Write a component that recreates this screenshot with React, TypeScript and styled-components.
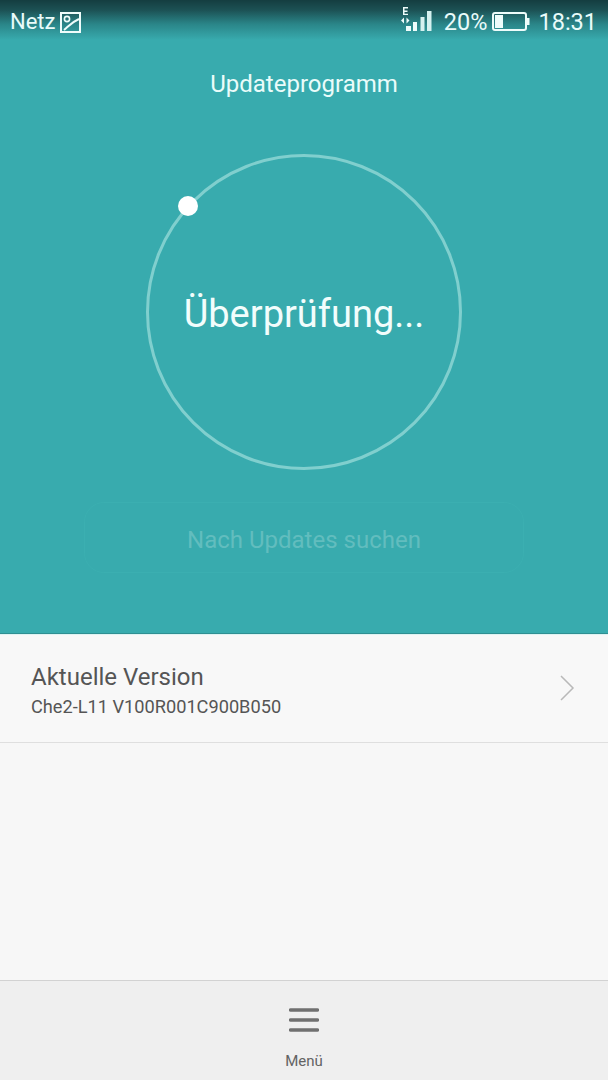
import React from "react";
import styled, { createGlobalStyle } from "styled-components";

const Global = createGlobalStyle`
  html, body { margin: 0; padding: 0; background: #f7f7f7; }
  body { font-family: Roboto, "Liberation Sans", sans-serif; }
`;

const Screen = styled.div`
  width: 608px;
  height: 1080px;
  display: flex;
  flex-direction: column;
  overflow: hidden;
  background: #f7f7f7;
`;

const Hero = styled.section`
  height: 633px;
  flex: none;
  display: flex;
  flex-direction: column;
  align-items: center;
  background: #38abae;
  border-bottom: 1px solid #2f8f92;
  box-sizing: content-box;
`;

const StatusBar = styled.header`
  align-self: stretch;
  height: 44px;
  flex: none;
  padding: 0 11px 0 10px;
  box-sizing: border-box;
  display: flex;
  align-items: flex-start;
  justify-content: space-between;
  color: #e9fbfa;
  background: linear-gradient(#143d40 0, #1c5154 10px, #2a8588 24px, #38abae 40px);
`;

const StatusGroup = styled.div`
  display: flex;
  align-items: center;
  height: 44px;
  line-height: 44px;
`;

const StatusLabel = styled.span<{ $gap?: number; $size?: number }>`
  margin-left: ${(p) => p.$gap ?? 0}px;
  font-size: ${(p) => p.$size ?? 23.5}px;
`;

const Title = styled.h1`
  margin: 26px 0 0;
  font-size: 24px;
  line-height: 28px;
  font-weight: 400;
  color: #eafcfa;
`;

const Ring = styled.div`
  position: relative;
  margin-top: 56px;
  width: 316px;
  height: 316px;
  padding-top: 4px;
  box-sizing: border-box;
  border-radius: 50%;
  border: 3.5px solid #80cfce;
  display: flex;
  align-items: center;
  justify-content: center;
  color: #f2fdfc;
  font-size: 38px;
  font-weight: 400;
`;

const Dot = styled.div`
  position: absolute;
  left: 29px;
  top: 39px;
  width: 20px;
  height: 20px;
  border-radius: 50%;
  background: #fff;
`;

const CheckButton = styled.div`
  margin-top: 32px;
  width: 440px;
  height: 71px;
  padding-top: 4px;
  box-sizing: border-box;
  border: 1px solid #3bafb1;
  border-radius: 20px;
  display: flex;
  align-items: center;
  justify-content: center;
  font-size: 24px;
  color: #62bdbe;
`;

const VersionRow = styled.div`
  height: 109px;
  flex: none;
  box-sizing: border-box;
  padding: 0 31px;
  display: flex;
  align-items: center;
  justify-content: space-between;
  background: #f8f8f8;
  border-bottom: 1px solid #dfdfdf;
  border-top: 1px solid #dff3f2;
`;

const VersionText = styled.div`
  display: flex;
  flex-direction: column;
  gap: 3px;
  padding-top: 3px;
`;

const VersionTitle = styled.div`
  font-size: 24px;
  line-height: 30px;
  color: #555;
`;

const VersionValue = styled.div`
  font-size: 18.2px;
  line-height: 24px;
  color: #555;
`;

const Chevron = styled.svg`
  width: 16px;
  height: 26px;
  margin: -2px 2px 0 0;
  flex: none;
`;

const Spacer = styled.div`
  flex: 1;
`;

const BottomBar = styled.nav`
  height: 100px;
  flex: none;
  box-sizing: border-box;
  border-top: 1px solid #d2d2d2;
  background: #efefef;
  display: flex;
  flex-direction: column;
  align-items: center;
  padding-top: 27px;
`;

const MenuIcon = styled.svg`
  width: 30px;
  height: 24px;
  flex: none;
`;

const MenuLabel = styled.div`
  margin-top: 19px;
  font-size: 15px;
  line-height: 20px;
  color: #636363;
`;

const SmallIcon = styled.svg<{ $ml?: number; $mr?: number }>`
  display: block;
  flex: none;
  margin-left: ${(p) => p.$ml ?? 0}px;
  margin-right: ${(p) => p.$mr ?? 0}px;
`;

export default function App() {
  return (
    <Screen>
      <Global />
      <Hero>
        <StatusBar>
          <StatusGroup>
            <StatusLabel $size={22}>Netz</StatusLabel>
            <SmallIcon $ml={5} width="21" height="21" viewBox="0 0 21 21">
              <rect x="1" y="1" width="19" height="19" fill="none" stroke="#eefcfb" strokeWidth="2" />
              <circle cx="7" cy="7" r="2.6" fill="none" stroke="#eefcfb" strokeWidth="1.6" />
              <path d="M4 18 C8 15 10 11 19 7" fill="none" stroke="#eefcfb" strokeWidth="2" />
            </SmallIcon>
          </StatusGroup>
          <StatusGroup>
            <SmallIcon $mr={12} width="32" height="44" viewBox="0 0 32 44">
              <path d="M3 7h5v1.400H4.500v2.200H7.500v1.300H4.500v1.800H8V15H3z" fill="#eefcfb" />
              <path d="M1 20.500l3-3v6zM6.500 17.500l3 3-3 3z" fill="#eefcfb" />
              <rect x="6" y="26" width="5" height="5" fill="#eefcfb" />
              <rect x="13" y="22" width="4" height="9" fill="#eefcfb" />
              <rect x="20.500" y="17" width="4" height="14" fill="#d5f1f0" />
              <rect x="27" y="11" width="4.500" height="20" fill="#d5f1f0" />
            </SmallIcon>
            <StatusLabel>20%</StatusLabel>
            <SmallIcon $ml={5} width="38" height="20" viewBox="0 0 38 20">
              <rect x="1" y="1" width="33" height="17" rx="2" fill="none" stroke="#eefcfb" strokeWidth="2" />
              <rect x="3" y="3" width="8" height="13" fill="#eefcfb" />
              <rect x="35" y="6" width="2.500" height="7" fill="#eefcfb" />
            </SmallIcon>
            <StatusLabel $gap={8}>18:31</StatusLabel>
          </StatusGroup>
        </StatusBar>
        <Title>Updateprogramm</Title>
        <Ring>
          <Dot />
          Überprüfung...
        </Ring>
        <CheckButton>Nach Updates suchen</CheckButton>
      </Hero>
      <VersionRow>
        <VersionText>
          <VersionTitle>Aktuelle Version</VersionTitle>
          <VersionValue>Che2-L11 V100R001C900B050</VersionValue>
        </VersionText>
        <Chevron viewBox="0 0 16 26">
          <path d="M2 1l12 12L2 25" fill="none" stroke="#b9b9b9" strokeWidth="1.500" />
        </Chevron>
      </VersionRow>
      <Spacer />
      <BottomBar>
        <MenuIcon viewBox="0 0 30 24">
          <path d="M1.500 2h27M1.500 12h27M1.500 22h27" stroke="#707070" strokeWidth="3.500" strokeLinecap="round" />
        </MenuIcon>
        <MenuLabel>Menü</MenuLabel>
      </BottomBar>
    </Screen>
  );
}
